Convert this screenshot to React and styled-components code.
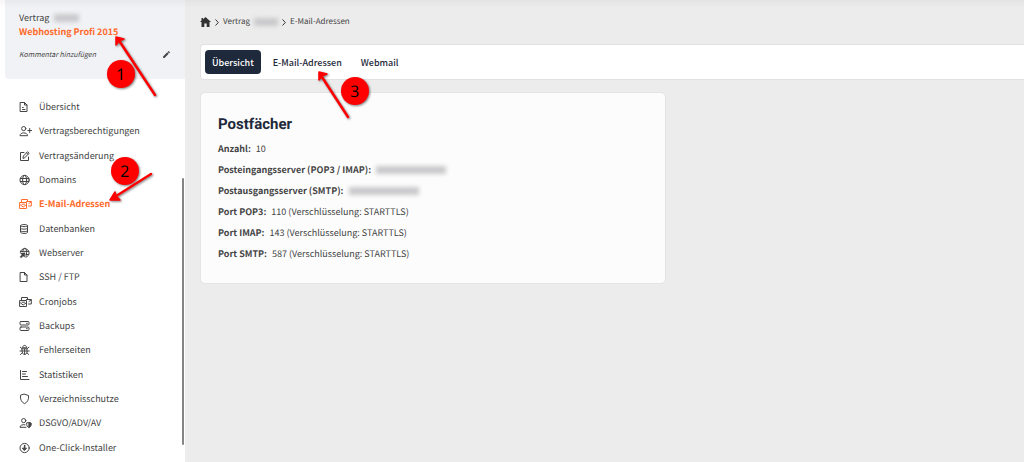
import React from "react";
import styled, { createGlobalStyle } from "styled-components";
import { MdEdit } from "react-icons/md";

const GlobalStyle = createGlobalStyle`
  * {
    box-sizing: border-box;
  }

  body {
    margin: 0;
    background-color: #ececec;
    color: #444;
    font-family: "Noto Sans CJK SC", "Noto Sans", sans-serif;
    font-size: 9px;
    line-height: 16px;
    text-rendering: geometricPrecision;
  }

  a {
    color: inherit;
    text-decoration: none;
  }

  button {
    padding: 0;
    border: none;
    background: none;
    color: inherit;
    font: inherit;
    cursor: pointer;
  }
`;

const Page = styled.div`
  display: flex;
  min-height: 100vh;
  position: relative;
`;

// soft shadow thrown by the header above the page
const TopShade = styled.div`
  position: absolute;
  top: 0;
  left: 0;
  right: 0;
  height: 8px;
  background: linear-gradient(rgba(0, 0, 0, 0.04), transparent);
  pointer-events: none;
`;

const Sidebar = styled.aside`
  display: flex;
  flex-direction: column;
  flex: 0 0 185px;
  padding: 0 0 2px 5px;
  background-color: #fff;
  position: relative;
`;

const ContractBox = styled.section`
  padding: 11px 14px 17px;
  margin-bottom: 16px;
  background-color: #f1f2f5;
  border-bottom-left-radius: 4px;
`;

const ContractLabel = styled.div`
  display: flex;
  align-items: center;
  gap: 5px;
  height: 14px;
`;

const ContractName = styled.a`
  display: block;
  line-height: 14px;
  color: #ff6a2b;
  font-weight: bold;
`;

const CommentRow = styled.button`
  display: flex;
  align-items: center;
  justify-content: space-between;
  width: 100%;
  margin-top: 7px;
  font-size: 7px;
  font-style: italic;
`;

const Redacted = styled.span`
  width: ${(props) => props.$width}px;
  height: 8px;
  background-color: #c9c9cb;
  filter: blur(2px);
`;

const Menu = styled.nav`
  display: flex;
  flex: 1;
  flex-direction: column;
`;

const MenuItem = styled.a`
  display: flex;
  flex: 1;
  align-items: center;
  gap: 7px;
  padding-left: 14px;
  color: ${(props) => (props.$active ? "#ff6a2b" : "#444")};
  font-weight: ${(props) => (props.$active ? "bold" : "normal")};
`;

const MenuIcon = styled.svg`
  width: 13px;
  height: 12px;
  fill: none;
  stroke: currentColor;
  stroke-linecap: round;
  stroke-linejoin: round;
`;

const ScrollThumb = styled.div`
  position: absolute;
  top: 178px;
  right: 1px;
  bottom: 17px;
  width: 2px;
  border-radius: 1px;
  background-color: #858585;
`;

const Main = styled.main`
  flex: 1;
  min-width: 0;
  padding: 14px 0 0 15px;
`;

const Breadcrumb = styled.nav`
  display: flex;
  align-items: center;
  gap: 4px;
  margin-bottom: 14px;
  font-size: 8px;

  a {
    display: flex;
  }
`;

const HomeIcon = styled.svg`
  width: 11px;
  height: 10px;
  fill: #333;
`;

const Chevron = styled.svg`
  width: 4px;
  height: 7px;
  fill: none;
  stroke: #333;
`;

const TabBar = styled.div`
  display: flex;
  gap: 5px;
  padding: 5px 4px;
  border: 1px solid #e2e2e2;
  border-right: none;
  border-radius: 4px 0 0 4px;
  background-color: #fff;
`;

const Tab = styled.button`
  padding: 5px 7px 3px;
  border-radius: 4px;
  background-color: ${(props) => (props.$active ? "#1e293b" : "#fff")};
  color: ${(props) => (props.$active ? "#fff" : "#1e293b")};
  font-weight: 500;
`;

const Card = styled.section`
  max-width: 466px;
  margin-top: 12px;
  padding: 21px 17px 19px;
  border: 1px solid #e4e4e4;
  border-radius: 5px;
  background-color: #fcfcfc;
`;

const CardTitle = styled.h2`
  margin: 0 0 4px;
  color: #1e293b;
  font-family: Roboto, sans-serif;
  font-size: 15px;
  line-height: 20px;
`;

const DetailList = styled.dl`
  margin: 0;
`;

const Detail = styled.div`
  display: flex;
  align-items: center;
  gap: 5px;
  height: 21px;

  dt {
    font-weight: bold;
  }

  dd {
    display: flex;
    margin: 0;
  }
`;

const Annotations = styled.svg`
  position: absolute;
  top: 0;
  left: 0;
  pointer-events: none;
  filter: drop-shadow(1px 1px 1px rgba(0, 0, 0, 0.5));
`;

const FileTextIcon = () => (
  <MenuIcon viewBox="0 0 13 12">
    <path d="M1.5 1.5h4L8 4v6.500H1.500zM5.500 1.600V4H8M3.500 8.500h2.500M3.500 6.500h.8" />
  </MenuIcon>
);

const UserPlusIcon = () => (
  <MenuIcon viewBox="0 0 13 12">
    <circle cx="4.7" cy="3.6" r="2.1" />
    <path d="M1 10.300c0-3.400 7.500-3.400 7.500 0zM10.700 3.500v4M8.800 5.500h3.800" />
  </MenuIcon>
);

const EditIcon = () => (
  <MenuIcon viewBox="0 0 13 12">
    <path d="M5 2.500H1.500v8h8V7M4 8l.4-2L8.600 1.700l1.500 1.500L6 7.500zM7.500 2.800 9 4.300" />
  </MenuIcon>
);

const GlobeIcon = () => (
  <MenuIcon viewBox="0 0 13 12">
    <circle cx="5.6" cy="6" r="4.6" />
    <ellipse cx="5.6" cy="6" rx="2" ry="4.6" />
    <path d="M1.400 4.500h8.400M1.400 7.500h8.400" />
  </MenuIcon>
);

const MailsIcon = () => (
  <MenuIcon viewBox="0 0 13 12">
    <path d="M2.500 3.500v-2h6v1.500M1 4.500h6.500v6H1zM1.500 7l2.700 2L7 7M3 6.200h2.500M7.500 3.500h4.800v4.500H9.500M10 5.500l2-1.500" />
  </MenuIcon>
);

const DatabaseIcon = () => (
  <MenuIcon viewBox="0 0 13 12">
    <path d="M1.500 2.500c0-1.300 7-1.300 7 0v7c0 1.300-7 1.300-7 0zM1.500 3c0 1 7 1 7 0M1.500 5.500c0 1 7 1 7 0M1.500 8c0 1 7 1 7 0" />
  </MenuIcon>
);

const WebserverIcon = () => (
  <MenuIcon viewBox="0 0 13 12">
    <path d="M1.300 5.400C1.700.3 9.800.3 10.100 5.800c0 2-1.200 3.700-3.200 4.400M3.800 4.600c.6-4.600 3.500-4.600 3.800 0 0 2 0 3-.7 4.500M1.500 4.400h8.300M7 7.500h2.600" />
    <path
      d="M1.200 9.800 3 7.800 1.500 6.200 6 5.800 5.500 10 4.200 8.900 2.300 10.800z"
      fill="currentColor"
      strokeWidth=".5"
    />
  </MenuIcon>
);

const FileIcon = () => (
  <MenuIcon viewBox="0 0 13 12">
    <path d="M1.500 1.500h4L8 4v6.500H1.500zM5.500 1.500V4H8" />
  </MenuIcon>
);

const ServerIcon = () => (
  <MenuIcon viewBox="0 0 13 12">
    <rect x="1" y="1.5" width="9" height="3.5" rx="1" />
    <rect x="1" y="7" width="9" height="3.5" rx="1" />
    <path d="M7.500 3.300h.8M7.500 8.700h.8" />
  </MenuIcon>
);

const BugIcon = () => (
  <MenuIcon viewBox="0 0 13 12">
    <path d="M3.600 3.400c0-2.800 4-2.800 4 0zM3.200 4.800h4.800v3.400c0 3-4.800 3-4.800 0zM5.600 5v5.300M1.300 3.200l1.900 1.600M9.900 3.200 8 4.800M1 7h9.200M1.500 10.500l1.800-1.600M9.700 10.500 8 8.900" />
  </MenuIcon>
);

const ChartIcon = () => (
  <MenuIcon viewBox="0 0 13 12">
    <path d="M1.500 1.500v9h8.500M3.500 2.500h4M3.500 5h3M3.500 7.500h5" />
  </MenuIcon>
);

const ShieldIcon = () => (
  <MenuIcon viewBox="0 0 13 12">
    <path d="M5.500 1.200 9.600 2.600c.3 4-1.200 6.700-4.100 8.100C2.600 9.300 1.100 6.600 1.400 2.600z" />
  </MenuIcon>
);

const UserShieldIcon = () => (
  <MenuIcon viewBox="0 0 13 12">
    <circle cx="4.7" cy="3.6" r="2.1" />
    <path d="M6 7.800C3.500 7.200 1 8.300 1 10.300h6" />
    <path d="M9.900 5.600 12.200 6.300c.2 2.100-.7 3.500-2.300 4.300-1.600-.8-2.500-2.200-2.300-4.300z" />
    <path d="M9.900 5.800v4.600c1.500-.8 2.200-2 2-4z" fill="currentColor" />
  </MenuIcon>
);

const InstallIcon = () => (
  <MenuIcon viewBox="0 0 13 12">
    <circle cx="5.6" cy="6" r="4.6" />
    <path d="M5.600 3.500v3" strokeWidth="1.5" />
    <path d="M3.700 6.200h3.800L5.600 8.300z" fill="currentColor" />
  </MenuIcon>
);

const BreadcrumbChevron = () => (
  <Chevron viewBox="0 0 4 7">
    <path d="M.5.500 3.300 3.500.500 6.500" />
  </Chevron>
);

const menuItems = [
  { label: "Übersicht", icon: <FileTextIcon /> },
  { label: "Vertragsberechtigungen", icon: <UserPlusIcon /> },
  { label: "Vertragsänderung", icon: <EditIcon /> },
  { label: "Domains", icon: <GlobeIcon /> },
  { label: "E-Mail-Adressen", icon: <MailsIcon />, active: true },
  { label: "Datenbanken", icon: <DatabaseIcon /> },
  { label: "Webserver", icon: <WebserverIcon /> },
  { label: "SSH / FTP", icon: <FileIcon /> },
  { label: "Cronjobs", icon: <MailsIcon /> },
  { label: "Backups", icon: <ServerIcon /> },
  { label: "Fehlerseiten", icon: <BugIcon /> },
  { label: "Statistiken", icon: <ChartIcon /> },
  { label: "Verzeichnisschutze", icon: <ShieldIcon /> },
  { label: "DSGVO/ADV/AV", icon: <UserShieldIcon /> },
  { label: "One-Click-Installer", icon: <InstallIcon /> },
];

const details = [
  { label: "Anzahl:", value: "10" },
  { label: "Posteingangsserver (POP3 / IMAP):", redacted: 70 },
  { label: "Postausgangsserver (SMTP):", redacted: 70 },
  { label: "Port POP3:", value: "110 (Verschlüsselung: STARTTLS)" },
  { label: "Port IMAP:", value: "143 (Verschlüsselung: STARTTLS)" },
  { label: "Port SMTP:", value: "587 (Verschlüsselung: STARTTLS)" },
];

const markers = [
  { label: "1", x: 121, y: 74, line: "M155 95 118 39", head: "M116 37v8l3-4 5-2z" },
  { label: "2", x: 125, y: 171, line: "M151 174 113 198", head: "M110 200l5-8 1 4 4 4z" },
  { label: "3", x: 355, y: 91, line: "M348 117 320 74", head: "M319 72v8l3-4 5-2z" },
];

const App = () => {
  return (
    <Page>
      <GlobalStyle />
      <Sidebar>
        <ContractBox>
          <ContractLabel>
            Vertrag <Redacted $width={25} />
          </ContractLabel>
          <ContractName href="#vertrag">Webhosting Profi 2015</ContractName>
          <CommentRow>
            Kommentar hinzufügen
            <MdEdit size={9} />
          </CommentRow>
        </ContractBox>
        <Menu>
          {menuItems.map((item) => (
            <MenuItem key={item.label} href="#menu" $active={item.active}>
              {item.icon}
              {item.label}
            </MenuItem>
          ))}
        </Menu>
        <ScrollThumb />
      </Sidebar>
      <Main>
        <Breadcrumb>
          <a href="#home" aria-label="Start">
            <HomeIcon viewBox="0 0 11 10">
              <path d="M5.500 0 11 5H9.500v5H6.700V6.500H4.300V10H1.500V5H0l1.500-1.400V1H3v1.300z" />
            </HomeIcon>
          </a>
          <BreadcrumbChevron />
          <a href="#vertrag">Vertrag</a>
          <Redacted $width={24} />
          <BreadcrumbChevron />
          <span>E-Mail-Adressen</span>
        </Breadcrumb>
        <TabBar>
          <Tab $active>Übersicht</Tab>
          <Tab>E-Mail-Adressen</Tab>
          <Tab>Webmail</Tab>
        </TabBar>
        <Card>
          <CardTitle>Postfächer</CardTitle>
          <DetailList>
            {details.map((detail) => (
              <Detail key={detail.label}>
                <dt>{detail.label}</dt>
                <dd>
                  {detail.redacted ? (
                    <Redacted $width={detail.redacted} />
                  ) : (
                    detail.value
                  )}
                </dd>
              </Detail>
            ))}
          </DetailList>
        </Card>
      </Main>
      <TopShade />
      <Annotations width="400" height="220">
        {markers.map((marker) => (
          <g key={marker.label}>
            <path d={marker.line} stroke="#f00" strokeWidth="2.5" strokeLinecap="round" />
            <path
              d={marker.head}
              fill="#f00"
              stroke="#f00"
              strokeWidth="1.5"
              strokeLinejoin="round"
            />
            <circle cx={marker.x} cy={marker.y} r="14" fill="#f00" />
            <text
              x={marker.x}
              y={marker.y + 6}
              textAnchor="middle"
              fontFamily="Noto Sans"
              fontSize="16"
            >
              {marker.label}
            </text>
          </g>
        ))}
      </Annotations>
    </Page>
  );
};

export default App;
